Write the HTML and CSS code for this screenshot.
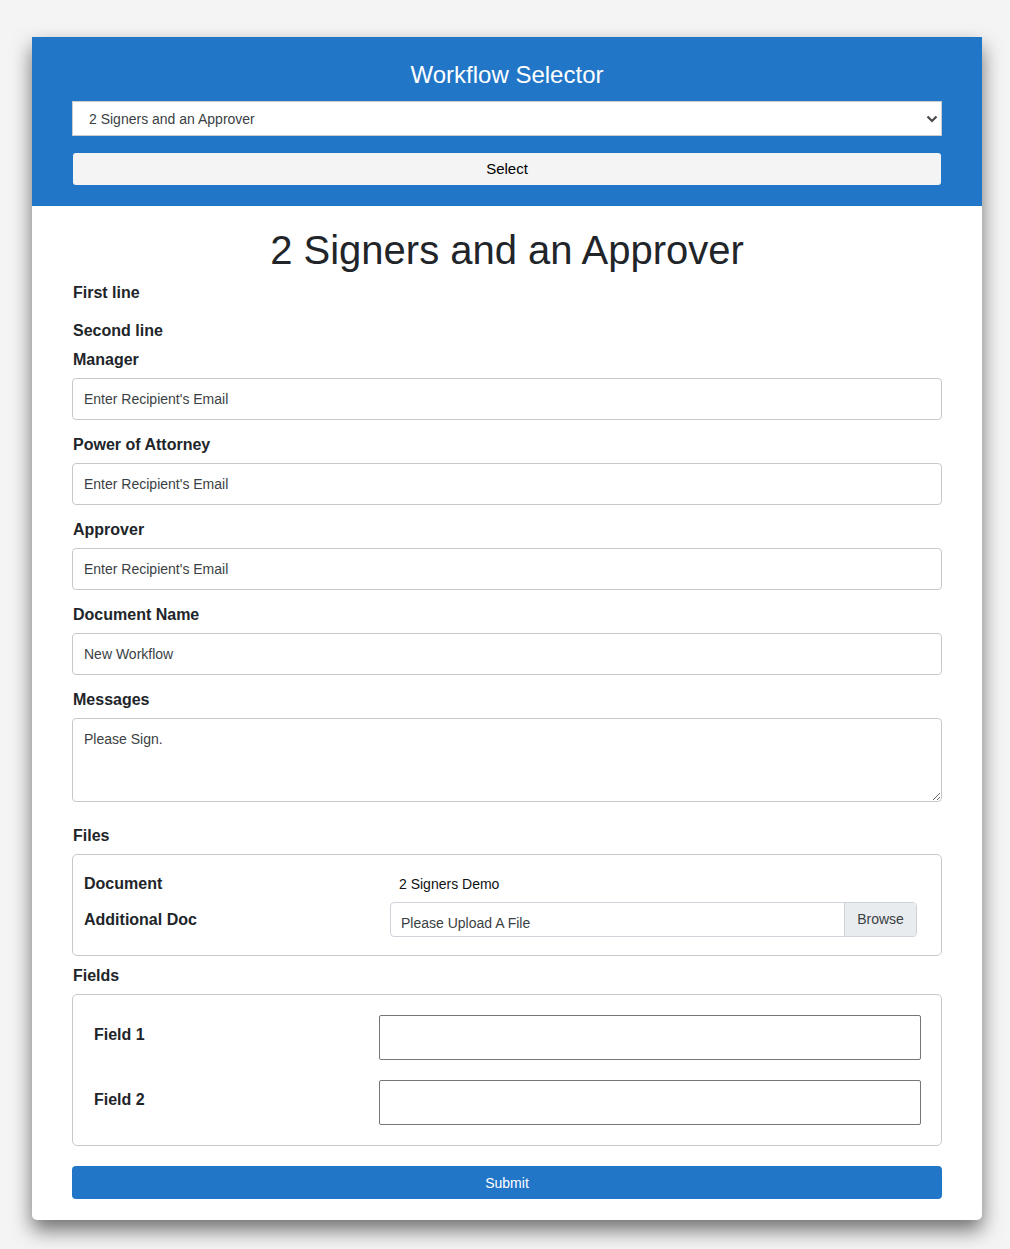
FILE: index.html
```html
<!DOCTYPE html>
<html>
<head>
<meta charset="utf-8">
<link rel="stylesheet" href="styles.css">
</head>
<body>
<div class="card">
  <header class="top">
    <h2 class="top-title">Workflow Selector</h2>
    <div class="select-wrap">
      <select class="wf-select">
        <option>2 Signers and an Approver</option>
      </select>
      <svg class="chev" width="12" height="8" viewBox="0 0 12 8"><path d="M1.5 1.5 L6 6 L10.5 1.5" fill="none" stroke="#4a4a4a" stroke-width="2.2"/></svg>
    </div>
    <button class="select-btn">Select</button>
  </header>
  <main class="body">
    <h1 class="title">2 Signers and an Approver</h1>
    <div class="label l-first">First line</div>
    <div class="label l-second">Second line</div>
    <div class="label l-group first">Manager</div>
    <input class="text-in" type="text" placeholder="Enter Recipient's Email">
    <div class="label l-group">Power of Attorney</div>
    <input class="text-in" type="text" placeholder="Enter Recipient's Email">
    <div class="label l-group">Approver</div>
    <input class="text-in" type="text" placeholder="Enter Recipient's Email">
    <div class="label l-group">Document Name</div>
    <input class="text-in" type="text" value="New Workflow">
    <div class="label l-group">Messages</div>
    <textarea class="msg">Please Sign.</textarea>
    <div class="label l-files">Files</div>
    <div class="box files">
      <div class="files-row r1">
        <div class="label">Document</div>
        <div class="doc-name">2 Signers Demo</div>
      </div>
      <div class="files-row r2">
        <div class="label">Additional Doc</div>
        <div class="file-in">
          <span class="file-text">Please Upload A File</span>
          <span class="browse">Browse</span>
        </div>
      </div>
    </div>
    <div class="label l-fields">Fields</div>
    <div class="box fields">
      <div class="field-row">
        <div class="label">Field 1</div>
        <input class="field-in" type="text">
      </div>
      <div class="field-row">
        <div class="label">Field 2</div>
        <input class="field-in" type="text">
      </div>
    </div>
    <button class="submit">Submit</button>
  </main>
</div>
</body>
</html>
```
FILE: styles.css
```css
* { box-sizing: border-box; }
html, body { margin: 0; padding: 0; }
body {
  background: #f4f4f4;
  font-family: "Liberation Sans", Arial, Helvetica, sans-serif;
  color: #212529;
  padding: 37px 28px 29px 32px;
}
.card {
  width: 950px;
  background: #fff;
  border-radius: 0 0 5px 5px;
  box-shadow: 0 10px 20px rgba(0,0,0,0.55);
  overflow: hidden;
}
.top {
  background: #2176c8;
  padding: 24px 40px 21px;
  display: flex;
  flex-direction: column;
}
.top-title {
  margin: 0;
  color: #fff;
  font-weight: normal;
  font-size: 24px;
  line-height: 28px;
  text-align: center;
}
.select-wrap {
  position: relative;
  margin-top: 12px;
}
.wf-select {
  appearance: none;
  -webkit-appearance: none;
  width: 100%;
  height: 35px;
  border: 1px solid #c8ccd0;
  border-radius: 0;
  background: #fff;
  font-family: inherit;
  font-size: 14px;
  color: #3b3f44;
  padding: 0 16px;
  display: block;
}
.chev {
  position: absolute;
  right: 4px;
  top: 14px;
}
.select-btn {
  margin: 17px 1px 0;
  height: 32px;
  border: none;
  border-radius: 3px;
  background: #f4f4f4;
  font-family: inherit;
  font-size: 15px;
  line-height: 30px;
  color: #000;
}
.body {
  padding: 20px 40px 21px;
  display: flex;
  flex-direction: column;
}
.title {
  margin: 0;
  font-weight: normal;
  font-size: 40px;
  line-height: 48px;
  text-align: center;
  color: #212529;
}
.label {
  font-weight: bold;
  font-size: 16px;
  line-height: 19px;
  color: #212529;
  padding-left: 1px;
}
.l-first { margin-top: 9px; }
.l-second { margin-top: 19px; }
.l-group { margin-top: 15px; margin-bottom: 9px; }
.l-group.first { margin-top: 10px; }
.text-in {
  height: 42px;
  border: 1px solid #c6c9cc;
  border-radius: 4px;
  padding: 0 11px;
  font-family: inherit;
  font-size: 14px;
  color: #3b3f44;
}
.text-in::placeholder { color: #3b3f44; opacity: 1; }
.msg {
  height: 84px;
  border: 1px solid #c6c9cc;
  border-radius: 4px;
  padding: 12px 11px;
  font-family: inherit;
  font-size: 14px;
  color: #3b3f44;
  resize: vertical;
}
.l-files { margin-top: 24px; margin-bottom: 9px; }
.l-fields { margin-top: 10px; margin-bottom: 9px; }
.box {
  border: 1px solid #c8c8c8;
  border-radius: 5px;
}
.files {
  padding: 18px 24px 18px 10px;
  display: flex;
  flex-direction: column;
  gap: 8px;
}
.files-row {
  display: grid;
  grid-template-columns: 307px 1fr;
  align-items: center;
}
.r1 { height: 21px; }
.doc-name {
  font-size: 14px;
  padding-left: 9px;
  color: #111;
}
.file-in {
  height: 35px;
  border: 1px solid #ced4da;
  border-radius: 4px;
  display: flex;
  overflow: hidden;
}
.file-text {
  flex: 1;
  font-size: 14px;
  color: #3b3f44;
  padding: 12px 10px 0;
}
.browse {
  width: 72px;
  background: #e9ecef;
  border-left: 1px solid #ced4da;
  font-size: 14px;
  color: #3b3f44;
  text-align: center;
  padding-top: 8px;
}
.fields {
  padding: 20px 20px 20px 20px;
  display: flex;
  flex-direction: column;
  gap: 20px;
}
.field-row {
  display: grid;
  grid-template-columns: 286px 1fr;
  align-items: start;
}
.field-row .label { margin-top: 10px; }
.field-in {
  height: 45px;
  border: 1px solid #767676;
  border-radius: 2px;
  width: 100%;
}
.submit {
  margin-top: 20px;
  height: 33px;
  border: none;
  border-radius: 4px;
  background: #2176c8;
  color: #fff;
  font-family: inherit;
  font-size: 14px;
}
```
